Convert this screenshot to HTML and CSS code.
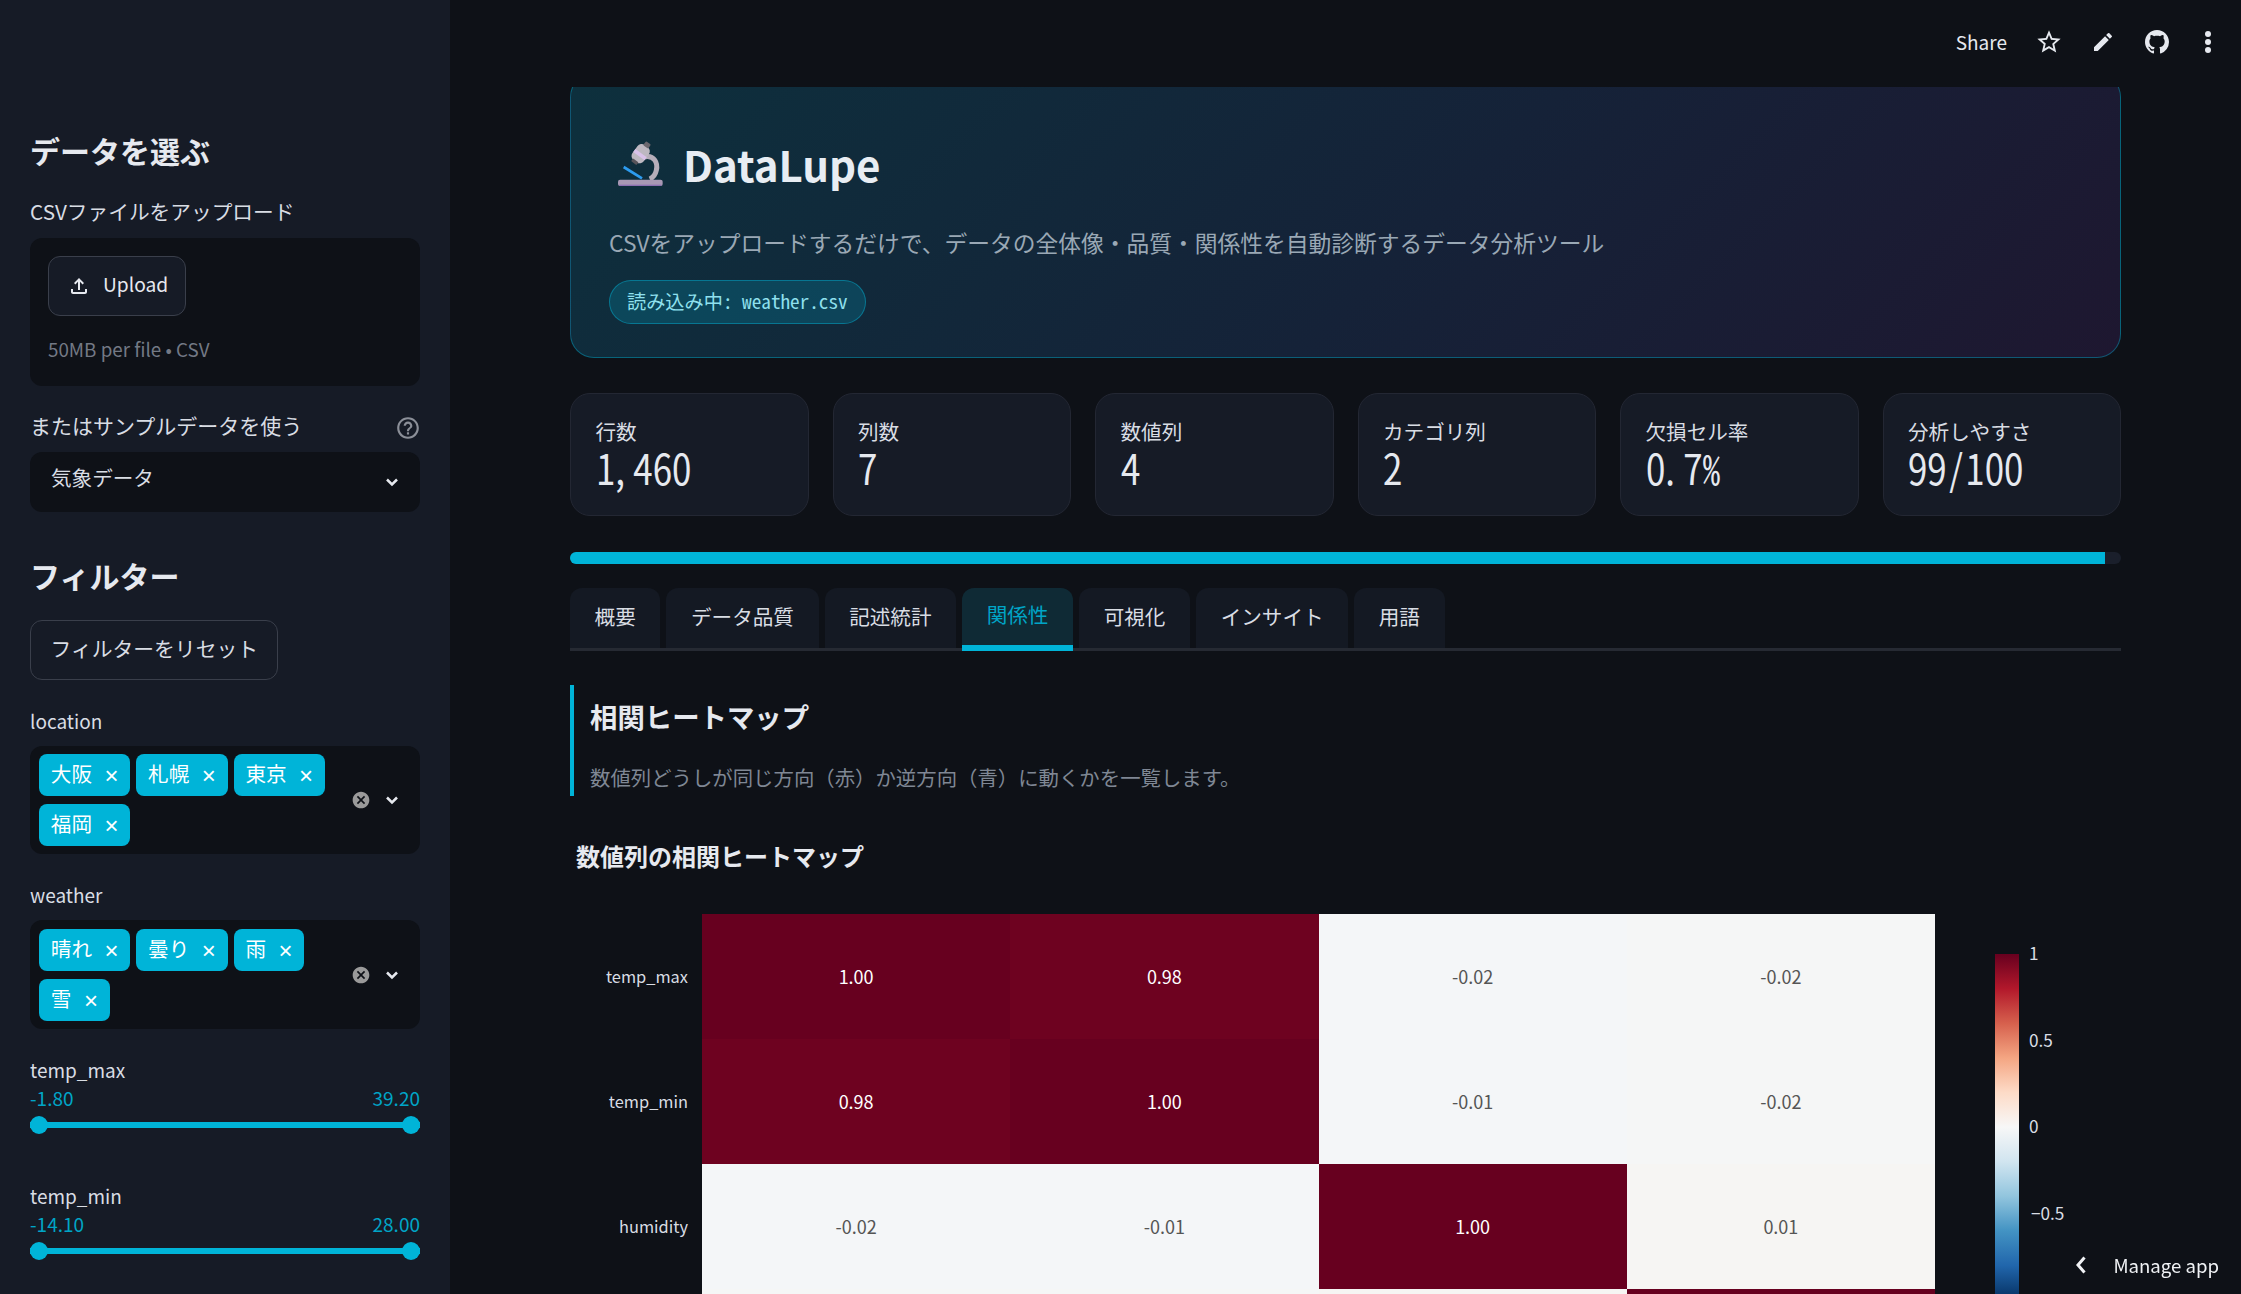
FILE: index.html
```html
<!DOCTYPE html>
<html lang="ja">
<head>
    <meta charset="UTF-8">
    <title>DataLupe</title>
    <link rel="stylesheet" href="styles.css">
</head>
<body>
    <div class="app">
        <!-- Sidebar -->
        <aside class="sidebar">
            <h2 class="side-title">データを選ぶ</h2>
            <div class="field-label upload-label">CSVファイルをアップロード</div>
            <div class="upload-box">
                <button class="btn upload-btn">
                    <svg class="upload-icon" viewBox="0 0 24 24"><path d="M18 15v3H6v-3H4v3c0 1.1.9 2 2 2h12c1.1 0 2-.9 2-2v-3h-2zM7 9l1.41 1.41L11 7.83V16h2V7.83l2.59 2.58L17 9l-5-5-5 5z"/></svg>
                    <span class="upload-text">Upload</span>
                </button>
                <div class="upload-hint">50MB per file • CSV</div>
            </div>

            <div class="field-label sample-label">
                <span>またはサンプルデータを使う</span>
                <svg class="help-icon" viewBox="0 0 24 24"><path d="M11 18h2v-2h-2v2zm1-16C6.48 2 2 6.48 2 12s4.48 10 10 10 10-4.48 10-10S17.52 2 12 2zm0 18c-4.41 0-8-3.59-8-8s3.59-8 8-8 8 3.59 8 8-3.59 8-8 8zm0-14c-2.21 0-4 1.79-4 4h2c0-1.1.9-2 2-2s2 .9 2 2c0 2-3 1.75-3 5h2c0-2.25 3-2.5 3-5 0-2.21-1.79-4-4-4z"/></svg>
            </div>
            <div class="select-box">
                <span class="select-text">気象データ</span>
                <svg class="chevron" viewBox="0 0 16 16"><path d="M3 5.5l5 5 5-5"/></svg>
            </div>

            <h2 class="side-title filter-title">フィルター</h2>
            <button class="btn reset-btn">フィルターをリセット</button>

            <div class="field-label multi-label latin">location</div>
            <div class="multi-box">
                <div class="tags">
                    <span class="tag">大阪<i>×</i></span>
                    <span class="tag">札幌<i>×</i></span>
                    <span class="tag">東京<i>×</i></span>
                    <span class="tag">福岡<i>×</i></span>
                </div>
                <div class="multi-controls">
                    <svg class="clear-icon" viewBox="0 0 24 24"><path d="M12 2C6.47 2 2 6.47 2 12s4.47 10 10 10 10-4.47 10-10S17.53 2 12 2zm5 13.59L15.59 17 12 13.41 8.41 17 7 15.59 10.59 12 7 8.41 8.41 7 12 10.59 15.59 7 17 8.41 13.41 12 17 15.59z"/></svg>
                    <svg class="chevron" viewBox="0 0 16 16"><path d="M3 5.5l5 5 5-5"/></svg>
                </div>
            </div>

            <div class="field-label multi-label latin">weather</div>
            <div class="multi-box weather-box">
                <div class="tags">
                    <span class="tag">晴れ<i>×</i></span>
                    <span class="tag">曇り<i>×</i></span>
                    <span class="tag">雨<i>×</i></span>
                    <span class="tag">雪<i>×</i></span>
                </div>
                <div class="multi-controls">
                    <svg class="clear-icon" viewBox="0 0 24 24"><path d="M12 2C6.47 2 2 6.47 2 12s4.47 10 10 10 10-4.47 10-10S17.53 2 12 2zm5 13.59L15.59 17 12 13.41 8.41 17 7 15.59 10.59 12 7 8.41 8.41 7 12 10.59 15.59 7 17 8.41 13.41 12 17 15.59z"/></svg>
                    <svg class="chevron" viewBox="0 0 16 16"><path d="M3 5.5l5 5 5-5"/></svg>
                </div>
            </div>

            <div class="field-label multi-label latin">temp_max</div>
            <div class="range-values"><span>-1.80</span><span>39.20</span></div>
            <div class="range"><b></b><b></b></div>

            <div class="field-label range-label latin">temp_min</div>
            <div class="range-values"><span>-14.10</span><span>28.00</span></div>
            <div class="range"><b></b><b></b></div>
        </aside>

        <!-- Main area -->
        <div class="main">
            <header class="topbar">
                <span class="share">Share</span>
                <svg class="top-icon star" viewBox="0 0 24 24"><path d="M22 9.24l-7.19-.62L12 2 9.19 8.63 2 9.24l5.46 4.73L5.82 21 12 17.27 18.18 21l-1.63-7.03L22 9.24zM12 15.4l-3.76 2.27 1-4.28-3.32-2.88 4.38-.38L12 6.1l1.71 4.04 4.38.38-3.32 2.88 1 4.28L12 15.4z"/></svg>
                <svg class="top-icon pencil" viewBox="0 0 24 24"><path d="M3 17.25V21h3.75L17.81 9.94l-3.75-3.75L3 17.25zM20.71 7.04a.996.996 0 000-1.41l-2.34-2.34a.996.996 0 00-1.41 0l-1.83 1.83 3.75 3.75 1.83-1.83z"/></svg>
                <svg class="top-icon github" viewBox="0 0 16 16"><path d="M8 0C3.58 0 0 3.58 0 8c0 3.54 2.29 6.53 5.47 7.59.4.07.55-.17.55-.38 0-.19-.01-.82-.01-1.49-2.01.37-2.53-.49-2.69-.94-.09-.23-.48-.94-.82-1.13-.28-.15-.68-.52-.01-.53.63-.01 1.08.58 1.23.82.72 1.21 1.87.87 2.33.66.07-.52.28-.87.51-1.07-1.78-.2-3.64-.89-3.64-3.95 0-.87.31-1.59.82-2.15-.08-.2-.36-1.02.08-2.12 0 0 .67-.21 2.2.82.64-.18 1.32-.27 2-.27.68 0 1.36.09 2 .27 1.53-1.04 2.2-.82 2.2-.82.44 1.1.16 1.92.08 2.12.51.56.82 1.27.82 2.15 0 3.07-1.87 3.75-3.65 3.95.29.25.54.73.54 1.48 0 1.07-.01 1.93-.01 2.2 0 .21.15.46.55.38A8.013 8.013 0 0016 8c0-4.42-3.58-8-8-8z"/></svg>
                <svg class="top-icon dots" viewBox="0 0 8 24"><circle cx="4" cy="4" r="3"/><circle cx="4" cy="12" r="3"/><circle cx="4" cy="20" r="3"/></svg>
            </header>

            <div class="content">
                <!-- Hero -->
                <section class="hero">
                    <div class="hero-title">
                        <svg class="scope" viewBox="40 22 138 138">
                            <path d="M118 70C150 62 160 90 155 110C152 125 145 132 135 136" fill="none" stroke="#b6aeba" stroke-width="15"/>
                            <g transform="rotate(36 108 60)">
                                <rect x="87" y="32" width="42" height="56" rx="15" fill="#bdb8c1"/>
                                <rect x="87" y="58" width="42" height="11" fill="#d9c2ea"/>
                                <rect x="99" y="20" width="18" height="15" rx="3" fill="#6b676e"/>
                                <rect x="98" y="85" width="20" height="10" rx="2" fill="#57545a"/>
                            </g>
                            <path d="M57 100L112 134" stroke="#2d9cf0" stroke-width="8"/>
                            <rect x="40" y="138" width="134" height="19" rx="6" fill="#a898b4"/>
                            <rect x="44" y="153" width="126" height="4" fill="#8c6fb0"/>
                        </svg>
                        <h1>DataLupe</h1>
                    </div>
                    <p class="hero-sub">CSVをアップロードするだけで、データの全体像・品質・関係性を自動診断するデータ分析ツール</p>
                    <span class="hero-badge">読み込み中: weather.csv</span>
                </section>

                <!-- Metric cards -->
                <section class="metrics">
                    <div class="metric"><div class="metric-label">行数</div><div class="metric-value">1<span class="sep">,</span>460</div></div>
                    <div class="metric"><div class="metric-label">列数</div><div class="metric-value">7</div></div>
                    <div class="metric"><div class="metric-label">数値列</div><div class="metric-value">4</div></div>
                    <div class="metric"><div class="metric-label">カテゴリ列</div><div class="metric-value">2</div></div>
                    <div class="metric"><div class="metric-label">欠損セル率</div><div class="metric-value">0<span class="sep">.</span>7<span class="pct">%</span></div></div>
                    <div class="metric"><div class="metric-label">分析しやすさ</div><div class="metric-value">99<span class="slash">/</span>100</div></div>
                </section>

                <div class="progress"><div class="progress-fill" style="width: 99%"></div></div>

                <!-- Tabs -->
                <nav class="tabs">
                    <span class="tab">概要</span>
                    <span class="tab">データ品質</span>
                    <span class="tab">記述統計</span>
                    <span class="tab active">関係性</span>
                    <span class="tab">可視化</span>
                    <span class="tab">インサイト</span>
                    <span class="tab">用語</span>
                </nav>

                <div class="section-head">
                    <h2>相関ヒートマップ</h2>
                    <p>数値列どうしが同じ方向（赤）か逆方向（青）に動くかを一覧します。</p>
                </div>

                <h3 class="chart-title">数値列の相関ヒートマップ</h3>

                <!-- Heatmap -->
                <div class="chart">
                    <div class="row-labels">
                        <span>temp_max</span>
                        <span>temp_min</span>
                        <span>humidity</span>
                    </div>
                    <div class="heatmap">
                        <div class="cell c100">1.00</div>
                        <div class="cell c98">0.98</div>
                        <div class="cell n02">-0.02</div>
                        <div class="cell n02b">-0.02</div>
                        <div class="cell c98">0.98</div>
                        <div class="cell c100">1.00</div>
                        <div class="cell n01">-0.01</div>
                        <div class="cell n02b">-0.02</div>
                        <div class="cell n02">-0.02</div>
                        <div class="cell n01">-0.01</div>
                        <div class="cell c100">1.00</div>
                        <div class="cell p01">0.01</div>
                        <div class="cell n02b"></div>
                        <div class="cell n02b"></div>
                        <div class="cell p01"></div>
                        <div class="cell c100"></div>
                    </div>
                    <div class="colorbar">
                        <div class="colorbar-ramp"></div>
                        <div class="colorbar-ticks">
                            <span>1</span>
                            <span>0.5</span>
                            <span>0</span>
                            <span class="minus">−0.5</span>
                        </div>
                    </div>
                </div>
            </div>
        </div>
    </div>

    <!-- Floating manage button -->
    <div class="manage">
        <svg class="manage-icon" viewBox="0 0 12 20"><path d="M9.5 2.5L3 10l6.5 7.5"/></svg>
        <span>Manage app</span>
    </div>
</body>
</html>
```

FILE: styles.css
```css
* {
    box-sizing: border-box;
}

html, body {
    margin: 0;
    height: 100%;
    overflow: hidden;
}

body {
    background-color: #0e1117;
    color: #e6e9ef;
    font-family: "Noto Sans CJK JP", "Noto Sans", sans-serif;
}

.app {
    display: flex;
    height: 1294px;
}

/* Sidebar */
.sidebar {
    width: 450px;
    flex-shrink: 0;
    padding: 129px 30px 0;
    background-color: #161b26;
    overflow: hidden;
}

.side-title {
    margin: 0;
    font-size: 30px;
    line-height: 42px;
    font-weight: 700;
    color: #e6e9ef;
}

.filter-title {
    margin-top: 42px;
}

.field-label {
    font-size: 20.7px;
    line-height: 28px;
    color: #d9dde4;
}

.field-label.latin {
    font-size: 19px;
}

.upload-label {
    margin-top: 26px;
}

.upload-box {
    margin-top: 13px;
    height: 148px;
    padding: 18px;
    background-color: #0e1117;
    border-radius: 12px;
}

.btn {
    display: flex;
    align-items: center;
    height: 60px;
    background-color: #161b26;
    border: 1.5px solid #3a3f4b;
    border-radius: 12px;
    color: #e6e9ef;
    font-family: inherit;
    font-size: 20px;
}

.upload-btn {
    width: 138px;
    padding: 0 0 0 18px;
}

.upload-icon {
    width: 24px;
    height: 24px;
    margin-right: 12px;
    fill: #e6e9ef;
}

.upload-text {
    margin-bottom: 4px;
    font-size: 19.2px;
}

.upload-hint {
    margin-top: 19px;
    font-size: 18.8px;
    line-height: 28px;
    color: #737985;
}

.sample-label {
    display: flex;
    justify-content: space-between;
    align-items: center;
    height: 28px;
    margin-top: 25px;
    font-size: 21px;
}

.help-icon {
    width: 26px;
    height: 26px;
    margin: 6px -1px 0 0;
    fill: #8b8f98;
}

.select-box {
    display: flex;
    justify-content: space-between;
    align-items: center;
    height: 60px;
    margin-top: 13px;
    padding: 0 20px 0 21px;
    background-color: #0e1117;
    border-radius: 12px;
    font-size: 20.6px;
    color: #d9dde4;
}

.select-text {
    padding-bottom: 10px;
}

.chevron {
    width: 16px;
    height: 16px;
    fill: none;
    stroke: #e6e9ef;
    stroke-width: 2.5;
}

.reset-btn {
    margin-top: 24px;
    width: 248px;
    padding: 0 0 4px 19.5px;
    font-size: 20.8px;
    color: #d9dde4;
}

.multi-label {
    margin-top: 27px;
}

.multi-box {
    display: flex;
    margin-top: 11px;
    padding: 8px 20px 8px 9px;
    background-color: #0e1117;
    border-radius: 12px;
}

.weather-box {
    padding-top: 9px;
}

.tags {
    display: flex;
    flex-wrap: wrap;
    gap: 8px 6px;
    flex: 1;
}

.tag {
    display: flex;
    align-items: center;
    height: 42px;
    padding: 0 11.8px 4px;
    background-color: #00b4d8;
    border-radius: 8px;
    color: #fff;
    font-size: 20.6px;
}

.tag i {
    margin: 6px 0 0 12.5px;
    font-style: normal;
    font-size: 24px;
    line-height: 1;
    font-family: "Liberation Sans", sans-serif;
}

.multi-controls {
    display: flex;
    align-items: center;
    gap: 13px;
}

.clear-icon {
    width: 20px;
    height: 20px;
    fill: #9a9a9a;
}

.range-values {
    display: flex;
    justify-content: space-between;
    margin-top: 2px;
    font-size: 19px;
    line-height: 24px;
    color: #00a5c7;
}

.range {
    display: flex;
    justify-content: space-between;
    align-items: center;
    height: 18px;
    margin-top: 6px;
    background: linear-gradient(#00b4d8, #00b4d8) center / 100% 6px no-repeat;
}

.range b {
    width: 18px;
    height: 18px;
    border-radius: 50%;
    background-color: #00b4d8;
}

.range-label {
    margin-top: 48px;
}

/* Main */
.main {
    flex: 1;
    min-width: 0;
    display: flex;
    flex-direction: column;
}

.topbar {
    display: flex;
    align-items: center;
    justify-content: flex-end;
    height: 87px;
    flex-shrink: 0;
    padding: 0 29px 3px 0;
    background-color: #0e1117;
}

.share {
    margin-right: 28px;
    padding-bottom: 2px;
    font-size: 19px;
    color: #e6e9ef;
}

.top-icon {
    fill: #e6e9ef;
}

.star {
    width: 28px;
    height: 28px;
    margin-right: 28px;
}

.pencil {
    width: 24px;
    height: 24px;
    margin-right: 30px;
}

.github {
    width: 24px;
    height: 24px;
    margin-right: 35px;
}

.dots {
    width: 8px;
    height: 26px;
}

.content {
    flex: 1;
    padding: 0 120px;
    overflow: hidden;
}

/* Hero */
.hero {
    height: 285px;
    margin-top: -14px;
    padding: 61px 38px 0;
    border: 1.5px solid rgba(0, 180, 216, 0.4);
    border-radius: 24px;
    background: linear-gradient(135deg, #0d303d 0%, #152238 55%, #1e1730 100%);
}

.hero-title {
    display: flex;
    align-items: center;
    gap: 19px;
}

.scope {
    width: 46px;
    height: 46px;
    margin-left: 9px;
}

.hero-title h1 {
    margin: 0;
    font-size: 42px;
    line-height: 58px;
    font-weight: 700;
    color: #e8edf3;
}

.hero-sub {
    margin: 34px 0 0;
    font-size: 22.75px;
    line-height: 32px;
    color: #9aa8b5;
}

.hero-badge {
    display: inline-block;
    margin-top: 21px;
    height: 44px;
    padding: 0 17px;
    border: 1.5px solid rgba(0, 180, 216, 0.45);
    border-radius: 22px;
    background-color: rgba(0, 180, 216, 0.2);
    color: #8fe0ee;
    font-feature-settings: "hwid";
    font-size: 19.2px;
    line-height: 41px;
}

/* Metric cards */
.metrics {
    display: grid;
    grid-template-columns: repeat(6, 1fr);
    gap: 24px;
    margin-top: 35px;
}

.metric {
    height: 123px;
    padding: 23px 24.5px 0;
    background-color: #161b26;
    border: 1.5px solid #232733;
    border-radius: 20px;
}

.metric-label {
    font-size: 20.6px;
    line-height: 28px;
    color: #d9dde4;
}

/* digits are tall and narrow in the screenshot */
.metric-value {
    font-size: 42px;
    line-height: 44px;
    color: #e6e9ef;
    transform: scaleX(0.83);
    transform-origin: left center;
}

.metric-value .sep {
    margin-right: 10px;
}

.metric-value .slash {
    margin: 0 3px;
}

.metric-value .pct {
    font-feature-settings: "hwid";
}

.progress {
    height: 12px;
    margin-top: 36px;
    background-color: #1a1f2b;
    border-radius: 6px;
    overflow: hidden;
}

.progress-fill {
    height: 100%;
    background-color: #00b4d8;
}

/* Tabs */
.tabs {
    display: flex;
    gap: 6px;
    height: 63px;
    margin-top: 24px;
    border-bottom: 3px solid #262a33;
}

.tab {
    height: 60px;
    padding: 0 24.6px;
    background-color: #141923;
    border-radius: 12px 12px 0 0;
    font-size: 20.6px;
    line-height: 56px;
    color: #d9dde4;
}

.tab.active {
    height: 63px;
    background-color: #0f2a35;
    border-bottom: 6px solid #00b4d8;
    color: #00a5c7;
    line-height: 52px;
}

/* Section heading */
.section-head {
    height: 111px;
    margin-top: 34px;
    padding: 12px 0 0 16px;
    border-left: 4px solid #00b4d8;
}

.section-head h2 {
    margin: 0;
    font-size: 27.4px;
    line-height: 38px;
    font-weight: 700;
    color: #e6e9ef;
}

.section-head p {
    margin: 28px 0 0;
    font-size: 20.4px;
    line-height: 28px;
    color: #7f8794;
}

.chart-title {
    margin: 42px 0 0 6px;
    font-size: 24px;
    line-height: 36px;
    font-weight: 700;
    color: #e6e9ef;
}

/* Heatmap chart */
.chart {
    display: flex;
    margin-top: 40px;
}

.row-labels {
    display: grid;
    grid-auto-rows: 125px;
    width: 132px;
    padding: 0 14px 0 0;
    text-align: right;
    font-size: 16.4px;
    line-height: 125px;
    color: #d9dde4;
}

.heatmap {
    display: grid;
    grid-template-columns: repeat(4, 308.25px);
    grid-auto-rows: 125px;
}

.cell {
    text-align: center;
    font-size: 18px;
    line-height: 125px;
    color: #555;
}

.c100 {
    background-color: #67001f;
    color: #fff;
}

.c98 {
    background-color: #6e0220;
    color: #fff;
}

.n02 {
    background-color: #f4f6f8;
}

.n02b {
    background-color: #f5f6f6;
}

.n01 {
    background-color: #f4f6f8;
}

.p01 {
    background-color: #f6f5f3;
}

.colorbar {
    display: flex;
    margin: 40px 0 0 60px;
}

.colorbar-ramp {
    width: 24px;
    height: 346px;
    background: linear-gradient(#67001f 0%, #b2182b 10%, #d6604d 20%, #f4a582 30%, #fddbc7 40%, #f7f7f7 50%, #d1e5f0 60%, #92c5de 70%, #4393c3 80%, #2166ac 90%, #053061 100%);
}

.colorbar-ticks {
    display: flex;
    flex-direction: column;
    margin: -13px 0 0 10px;
    font-size: 17.2px;
    line-height: 24px;
    color: #d9dde4;
}

.colorbar-ticks span {
    height: 86.5px;
}

.colorbar-ticks .minus {
    margin-left: 2px;
}

/* Manage app */
.manage {
    position: fixed;
    right: 22px;
    bottom: 15px;
    display: flex;
    align-items: center;
    gap: 26px;
    color: #f0f2f5;
    font-size: 18.6px;
    line-height: 28px;
}

.manage-icon {
    width: 12px;
    height: 20px;
    fill: none;
    stroke: #f0f2f5;
    stroke-width: 3;
}
```
